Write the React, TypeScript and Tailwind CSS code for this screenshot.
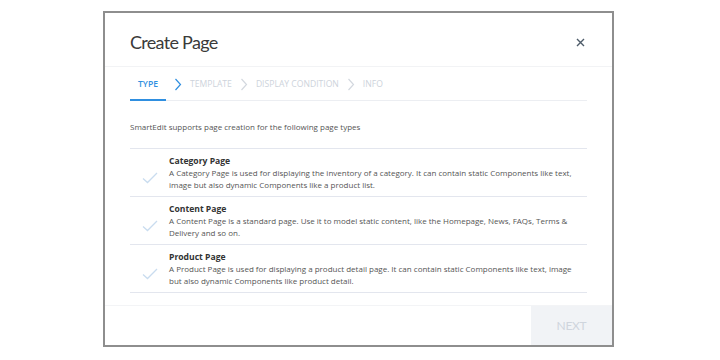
import { FC } from "react";

interface IPageType {
  title: string;
  lines: string[];
}

const pageTypes: IPageType[] = [
  {
    title: "Category Page",
    lines: [
      "A Category Page is used for displaying the inventory of a category. It can contain static Components like text,",
      "image but also dynamic Components like a product list.",
    ],
  },
  {
    title: "Content Page",
    lines: [
      "A Content Page is a standard page. Use it to model static content, like the Homepage, News, FAQs, Terms &",
      "Delivery and so on.",
    ],
  },
  {
    title: "Product Page",
    lines: [
      "A Product Page is used for displaying a product detail page. It can contain static Components like text, image",
      "but also dynamic Components like product detail.",
    ],
  },
];

const Chevron: FC<{ active?: boolean }> = ({ active }) => (
  <svg width="8" height="13" viewBox="0 0 8 13" className="mx-[8px]">
    <path
      d="M1.5 1 L6.5 6.5 L1.5 12"
      fill="none"
      stroke={active ? "#2f8fe0" : "#d3d8df"}
      strokeWidth="1.2"
    />
  </svg>
);

const Check: FC = () => (
  <svg width="16" height="12" viewBox="0 0 16 12">
    <path d="M1 6.5 L5.5 10.5 L15 1" fill="none" stroke="#c9dcef" strokeWidth="1.3" />
  </svg>
);

const App: FC = () => {
  return (
    <div className="w-[720px] h-[360px] bg-white pt-[11px] pl-[103px] font-['Open_Sans',sans-serif]">
      <div className="w-[511px] h-[336px] border-2 border-[#8e8e8e] flex flex-col bg-white">
        <div className="h-[54px] flex items-center justify-between pl-[25px] pr-[27px] pt-[6px] border-b border-[#f2f3f5]">
          <span className="font-['Lato',sans-serif] text-[18px] tracking-[-0.7px] text-[#3a3a3a]">
            Create Page
          </span>
          <svg width="9" height="9" viewBox="0 0 9 9">
            <path d="M1 1 L8 8 M8 1 L1 8" stroke="#4d5b69" strokeWidth="1.4" />
          </svg>
        </div>

        <div className="mx-[25px] h-[34px] flex items-center border-b border-[#eceef2] text-[8.6px] uppercase pt-[1px]">
          <div className="h-full flex items-center px-[8px] border-b-2 border-[#2f8fe0] -mb-[1px] mt-[1px] font-semibold text-[#2f8fe0]">
            Type
          </div>
          <Chevron active />
          <span className="text-[#cdd3db]">Template</span>
          <Chevron />
          <span className="text-[#cdd3db]">Display Condition</span>
          <Chevron />
          <span className="text-[#cdd3db]">Info</span>
        </div>

        <div className="pl-[25px] pt-[20px] pb-[15px] text-[8px] text-[#555]">
          SmartEdit supports page creation for the following page types
        </div>

        <div className="mx-[25px] border-t border-[#e3e6ee]">
          {pageTypes.map((pageType) => (
            <div
              key={pageType.title}
              className="h-[48px] flex items-center border-b border-[#e3e6ee]"
            >
              <div className="w-[39px] flex justify-start pl-[12px] pt-[10px]">
                <Check />
              </div>
              <div className="leading-[12px]">
                <div className="text-[8.6px] font-bold text-[#333]">{pageType.title}</div>
                {pageType.lines.map((line) => (
                  <div key={line} className="text-[8px] text-[#555] whitespace-nowrap">
                    {line}
                  </div>
                ))}
              </div>
            </div>
          ))}
        </div>

        <div className="mt-auto h-[40px] border-t border-[#f3f4f6] flex justify-end">
          <button className="w-[81px] h-full bg-[#f1f3f6] text-[12px] text-[#cfd5dd] font-['Lato',sans-serif] tracking-[-0.3px]">
            NEXT
          </button>
        </div>
      </div>
    </div>
  );
};

export default App;
